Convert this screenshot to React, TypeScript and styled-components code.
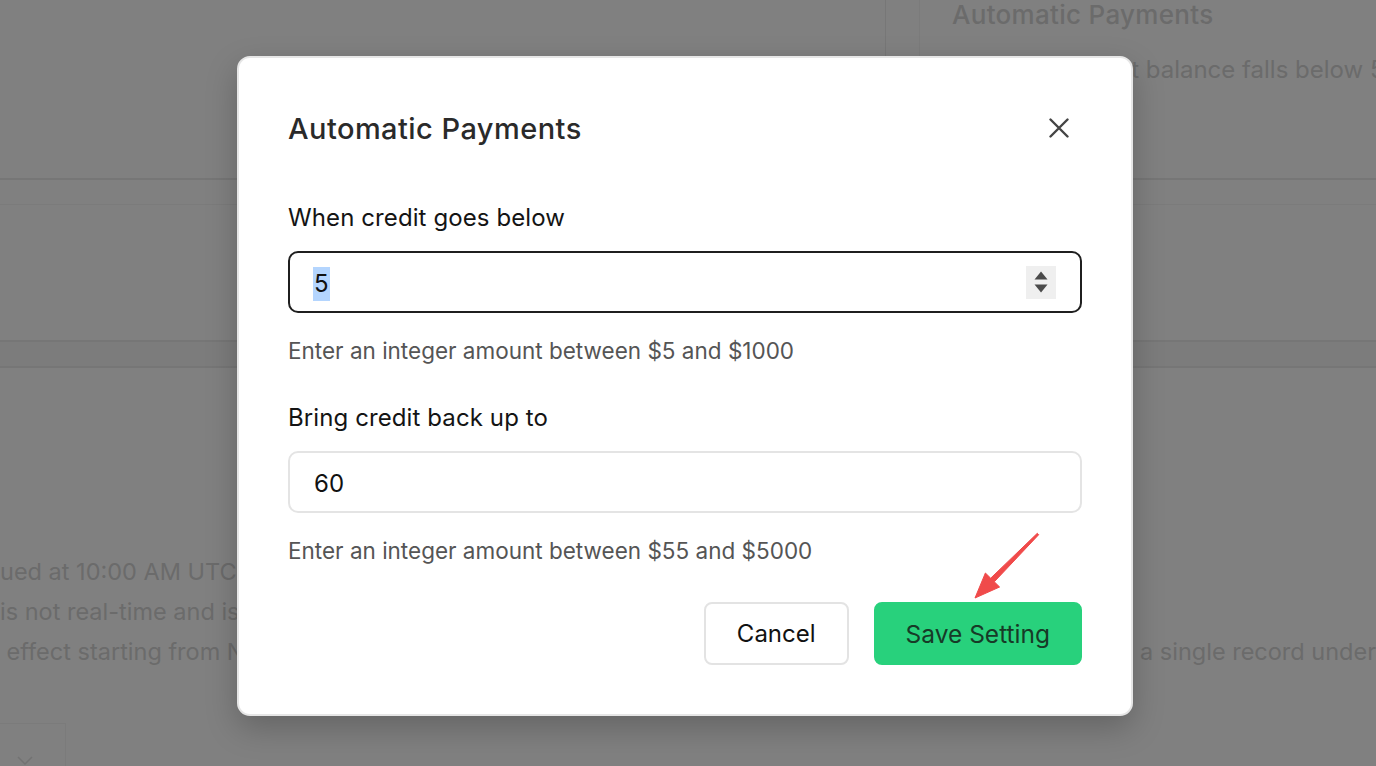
import React from "react";
import styled, { createGlobalStyle } from "styled-components";

const Global = createGlobalStyle`
  html, body { margin: 0; padding: 0; }
  body {
    width: 1376px;
    height: 766px;
    overflow: hidden;
    background: #808080;
    font-family: Inter, "Noto Sans", "Liberation Sans", sans-serif;
  }
  #root { height: 766px; }
  * { box-sizing: border-box; }
`;

const Page = styled.div`
  position: relative;
  width: 1376px;
  height: 766px;
  overflow: hidden;
  background: #808080;
  color: #6b6b6b;
`;

/* ---------- dimmed page underneath ---------- */
const TopArea = styled.div`
  display: flex;
  height: 178px;
`;
const LeftPane = styled.div`
  width: 886px;
  border-right: 1px solid #777777;
`;
const Gutter = styled.div`
  width: 34px;
  border-right: 1px solid #7b7b7b;
`;
const RightPane = styled.div`
  flex: 1;
  padding-left: 32px;
  display: flex;
  flex-direction: column;
  gap: 25px;
  white-space: nowrap;
  overflow: hidden;
`;
const BgTitle = styled.div`
  font-size: 26px;
  font-weight: 500;
  line-height: 30px;
  letter-spacing: 0.3px;
`;
const BgText = styled.div`
  font-size: 24px;
  line-height: 30px;
`;
const TableRow = styled.div<{ $h: number; $shade?: boolean }>`
  height: ${(p) => p.$h}px;
  border-top: 2px solid #767676;
  background: ${(p) => (p.$shade ? "#7c7c7c" : "transparent")};
`;
const TableBody = styled.div`
  height: 136px;
  border-top: 1px solid #7b7b7b;
`;
const Notes = styled.div`
  display: grid;
  grid-template-columns: 1140px 1fr;
  padding-top: 184px;
  border-top: 2px solid #767676;
  font-size: 23.5px;
  line-height: 40px;
  white-space: nowrap;
`;
const NoteCol = styled.div<{ $pad?: number }>`
  display: flex;
  flex-direction: column;
  padding-top: ${(p) => p.$pad ?? 0}px;
  overflow: hidden;
`;
const SelectBox = styled.div`
  margin-top: 51px;
  width: 66px;
  height: 44px;
  border-top: 1px solid #7b7b7b;
  border-right: 1px solid #7b7b7b;
  display: flex;
  align-items: flex-end;
  padding-left: 16px;
  color: #727272;
`;

/* ---------- modal ---------- */
const Overlay = styled.div`
  position: absolute;
  inset: 0;
  padding: 56px 0 0 237px;
`;
const Modal = styled.div`
  width: 896px;
  height: 660px;
  background: #ffffff;
  border: 2px solid #e6e6e6;
  border-radius: 13px;
  box-shadow: 0 12px 32px rgba(0, 0, 0, 0.22);
  padding: 50px 49px 0 49px;
  display: flex;
  flex-direction: column;
`;
const Header = styled.div`
  height: 40px;
  display: flex;
  align-items: center;
  justify-content: space-between;
`;
const Title = styled.h2`
  margin: 0;
  font-size: 29px;
  font-weight: 500;
  color: #2a2a2a;
  letter-spacing: 0.45px;
`;
const CloseButton = styled.button`
  width: 46px;
  height: 46px;
  border: none;
  background: transparent;
  display: flex;
  align-items: center;
  justify-content: center;
  padding: 0;
  color: #444444;
`;
const Field = styled.div<{ $top: number }>`
  display: flex;
  flex-direction: column;
  margin-top: ${(p) => p.$top}px;
`;
const Label = styled.div`
  font-size: 24px;
  line-height: 30px;
  color: #141414;
  letter-spacing: 0.1px;
`;
const InputBox = styled.div<{ $active?: boolean }>`
  margin-top: 18px;
  height: 62px;
  border: 2px solid ${(p) => (p.$active ? "#1f1f1f" : "#e4e4e4")};
  border-radius: 10px;
  display: flex;
  align-items: center;
  justify-content: space-between;
  padding: 0 24px 0 23px;
  font-size: 24px;
  color: #111111;
`;
const Value = styled.span<{ $selected?: boolean }>`
  line-height: 34px;
  padding: 0 1px;
  margin-top: 3px;
  background: ${(p) => (p.$selected ? "#b4d5fe" : "transparent")};
`;
const Spinner = styled.div`
  width: 30px;
  height: 33px;
  background: #efefef;
  display: flex;
  flex-direction: column;
  align-items: center;
  justify-content: center;
  gap: 4px;
`;
const Help = styled.div`
  margin-top: 24px;
  font-size: 22.5px;
  line-height: 28px;
  color: #555555;
`;
const Actions = styled.div`
  margin-top: 37px;
  display: flex;
  justify-content: flex-end;
  gap: 25px;
`;
const Button = styled.button<{ $primary?: boolean }>`
  height: 63px;
  padding: 0 ${(p) => (p.$primary ? 30 : 31)}px;
  border-radius: 8px;
  font-family: inherit;
  font-size: ${(p) => (p.$primary ? 24.5 : 24)}px;
  border: 2px solid ${(p) => (p.$primary ? "#28d17c" : "#e3e3e3")};
  background: ${(p) => (p.$primary ? "#28d17c" : "#ffffff")};
  color: ${(p) => (p.$primary ? "#173a27" : "#111111")};
`;
const Annotation = styled.svg`
  position: absolute;
  left: 960px;
  top: 525px;
`;

export default function App() {
  return (
    <>
      <Global />
      <Page>
        <TopArea>
          <LeftPane />
          <Gutter />
          <RightPane>
            <BgTitle>Automatic Payments</BgTitle>
            <BgText>When the credi t balance falls below 5</BgText>
          </RightPane>
        </TopArea>
        <TableRow $h={26} />
        <TableBody />
        <TableRow $h={26} $shade />
        <Notes>
          <NoteCol>
            <span>ued at 10:00 AM UTC</span>
            <span>is not real-time and is</span>
            <span>&nbsp;effect starting from N</span>
          </NoteCol>
          <NoteCol $pad={80}>
            <span>a single record under</span>
          </NoteCol>
        </Notes>
        <SelectBox>
          <svg width="18" height="12" viewBox="0 0 18 12">
            <path d="M2 2l7 7 7-7" fill="none" stroke="currentColor" strokeWidth="1.5" />
          </svg>
        </SelectBox>

        <Overlay>
          <Modal>
            <Header>
              <Title>Automatic Payments</Title>
              <CloseButton aria-label="Close">
                <svg width="20" height="20" viewBox="0 0 20 20">
                  <path
                    d="M1.5 1.5l17 17M18.5 1.5l-17 17"
                    stroke="currentColor"
                    strokeWidth="2.4"
                    strokeLinecap="round"
                  />
                </svg>
              </CloseButton>
            </Header>

            <Field $top={55}>
              <Label>When credit goes below</Label>
              <InputBox $active>
                <Value $selected>5</Value>
                <Spinner>
                  <svg width="14" height="9" viewBox="0 0 14 9">
                    <path d="M7 0.5L13.5 8.5H0.5Z" fill="#4a4a4a" />
                  </svg>
                  <svg width="14" height="9" viewBox="0 0 14 9">
                    <path d="M0.5 0.5H13.5L7 8.5Z" fill="#4a4a4a" />
                  </svg>
                </Spinner>
              </InputBox>
              <Help>Enter an integer amount between $5 and $1000</Help>
            </Field>

            <Field $top={38}>
              <Label>Bring credit back up to</Label>
              <InputBox>
                <Value>60</Value>
              </InputBox>
              <Help>Enter an integer amount between $55 and $5000</Help>
            </Field>

            <Actions>
              <Button>Cancel</Button>
              <Button $primary>Save Setting</Button>
            </Actions>
          </Modal>
        </Overlay>

        <Annotation width="90" height="80" viewBox="0 0 90 80">
          <polygon
            points="77.3,8.3 30.7,53.2 25.4,48 15,73 39.6,62 34.3,56.8 78.7,9.7"
            fill="#f04a4a"
            stroke="#f04a4a"
            strokeWidth="1"
            strokeLinejoin="round"
          />
        </Annotation>
      </Page>
    </>
  );
}
